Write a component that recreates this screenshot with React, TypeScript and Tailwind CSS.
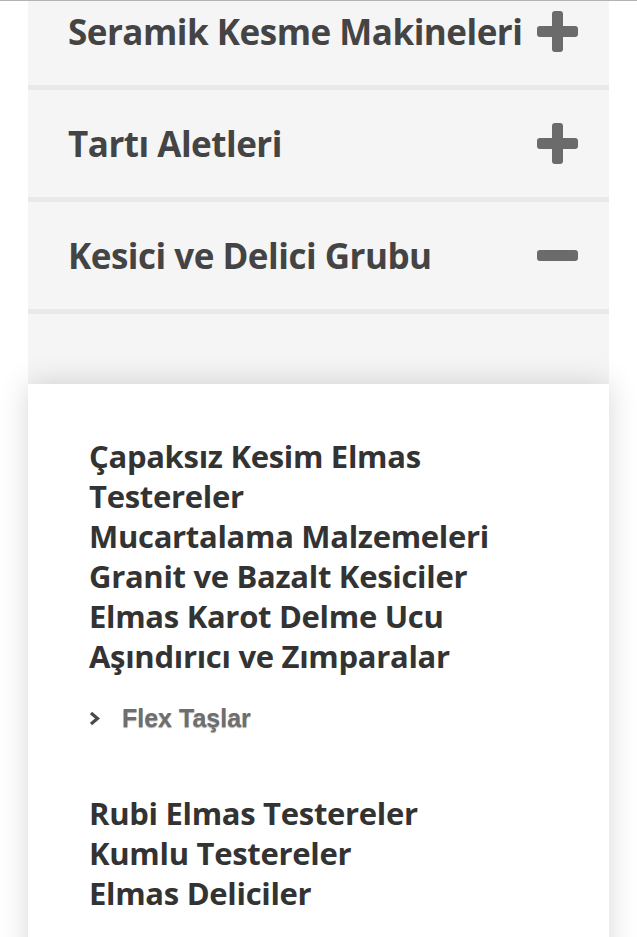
import React from 'react';

const categories = [
  { id: 1, title: 'Seramik Kesme Makineleri', open: false },
  { id: 2, title: 'Tartı Aletleri', open: false },
  { id: 3, title: 'Kesici ve Delici Grubu', open: true },
];

const firstLinks = [
  'Çapaksız Kesim Elmas Testereler',
  'Mucartalama Malzemeleri',
  'Granit ve Bazalt Kesiciler',
  'Elmas Karot Delme Ucu',
  'Aşındırıcı ve Zımparalar',
];

const secondLinks = ['Rubi Elmas Testereler', 'Kumlu Testereler', 'Elmas Deliciler'];

const Toggle: React.FC<{ open: boolean }> = ({ open }) => (
  <span className="relative block w-[41px] h-[41px] shrink-0">
    <span className="absolute left-0 right-0 top-[15px] h-[11px] rounded-[3px] bg-[#6b6b6b]" />
    {!open && <span className="absolute top-0 bottom-0 left-[15px] w-[11px] rounded-[3px] bg-[#6b6b6b]" />}
  </span>
);

const App: React.FC = () => {
  return (
    <div className="min-h-[937px] bg-white border-t border-[#b3b3b3] overflow-hidden font-['Open_Sans',sans-serif]">
      <div className="mx-[28px] bg-[#f5f5f5]">
        {categories.map(cat => (
          <div
            key={cat.id}
            className="flex items-center justify-between pl-[40px] pr-[31px] h-[112px] first:-mt-[23px] border-b-[5px] border-[#e9e9e9]"
          >
            <span className="text-[35px] font-bold text-[#444] tracking-[-0.5px] leading-none">{cat.title}</span>
            <Toggle open={cat.open} />
          </div>
        ))}
        <div className="h-[70px]" />
      </div>

      <div className="mx-[28px] bg-white shadow-[0_0_28px_rgba(0,0,0,0.16)] pt-[52px] pb-[80px] pl-[61px]">
        <ul className="max-w-[440px] text-[31px] leading-[40px] font-bold text-[#333] tracking-[-0.3px]">
          {firstLinks.map(l => (
            <li key={l}>{l}</li>
          ))}
        </ul>
        <div className="flex items-center gap-[22px] mt-[30px] mb-[62px] font-['Liberation_Sans',Arial,sans-serif]">
          <svg width="11" height="15" viewBox="0 0 11 15" className="shrink-0">
            <path d="M2 2 L8.5 7.5 L2 13" stroke="#4a4a4a" strokeWidth="3.2" fill="none" />
          </svg>
          <span className="text-[25px] leading-none font-bold text-[#6e6e6e] [text-shadow:0_1px_1px_rgba(0,0,0,0.35)]">Flex Taşlar</span>
        </div>
        <ul className="text-[31px] leading-[40px] font-bold text-[#333] tracking-[-0.3px]">
          {secondLinks.map(l => (
            <li key={l}>{l}</li>
          ))}
        </ul>
      </div>
    </div>
  );
};

export default App;
